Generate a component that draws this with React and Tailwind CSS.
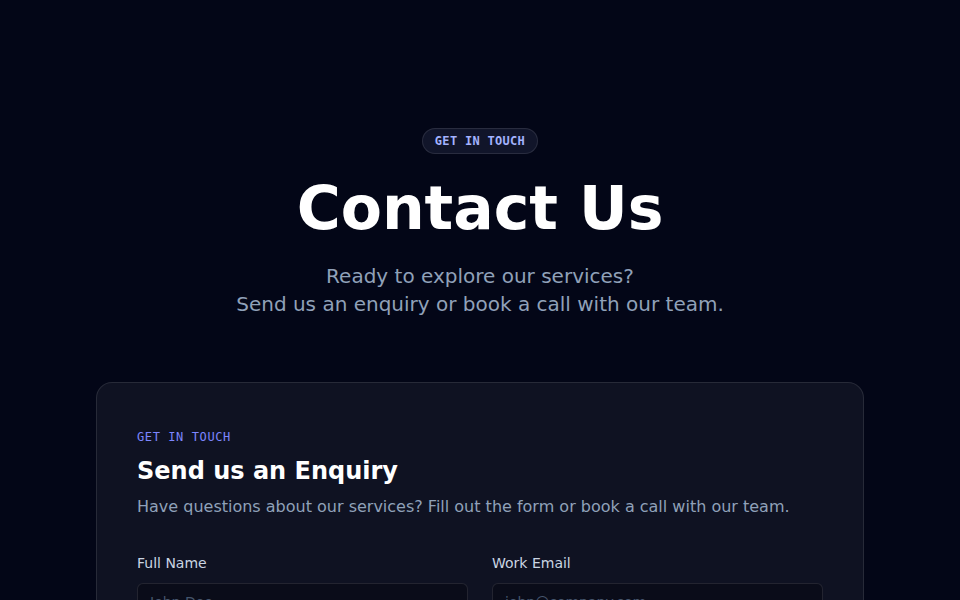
export default function App() {
    return (
        <div className="min-h-screen bg-[#030617] font-['DejaVu_Sans',sans-serif] text-white">
            <div className="flex flex-col items-center px-6 pt-32 pb-16">
                {/* Hero */}
                <span className="rounded-full border border-white/10 bg-[#11152a] px-3 py-1 font-['DejaVu_Sans_Mono',monospace] text-xs font-bold leading-4 tracking-wide text-indigo-300">GET IN TOUCH</span>
                <h1 className="mt-6 text-6xl font-bold leading-none">Contact Us</h1>
                <p className="mt-6 text-center text-xl leading-7 text-slate-400">
                    Ready to explore our services?<br />
                    Send us an enquiry or book a call with our team.
                </p>

                {/* Form card */}
                <div className="mt-16 w-full max-w-3xl rounded-2xl border border-white/10 bg-[#0f1222] px-10 pt-[46px] pb-10">
                    <p className="font-['DejaVu_Sans_Mono',monospace] text-xs leading-4 tracking-wider text-indigo-400">GET IN TOUCH</p>
                    <h2 className="mt-2.5 text-2xl font-bold leading-8">Send us an Enquiry</h2>
                    <p className="mt-2 text-base leading-6 text-slate-400">Have questions about our services? Fill out the form or book a call with our team.</p>

                    <div className="mt-[34px] grid grid-cols-2 gap-6">
                        <div>
                            <label className="block text-sm leading-5 text-slate-300">Full Name</label>
                            <input type="text" placeholder="John Doe" className="mt-2.5 w-full rounded-md border border-white/10 bg-[#0a0c19] px-3 py-2 text-sm leading-5 text-white placeholder:text-slate-600 outline-none" />
                        </div>
                        <div>
                            <label className="block text-sm leading-5 text-slate-300">Work Email</label>
                            <input type="email" placeholder="john@company.com" className="mt-2.5 w-full rounded-md border border-white/10 bg-[#0a0c19] px-3 py-2 text-sm leading-5 text-white placeholder:text-slate-600 outline-none" />
                        </div>
                    </div>
                </div>
            </div>
        </div>
    );
}
